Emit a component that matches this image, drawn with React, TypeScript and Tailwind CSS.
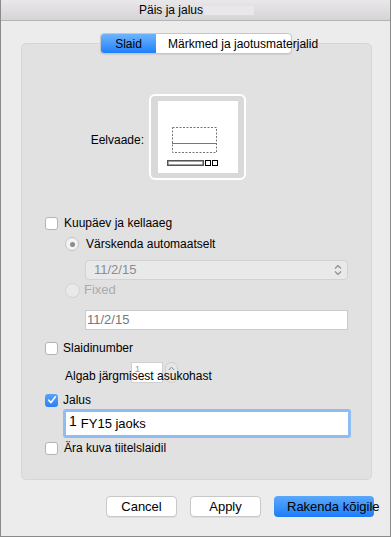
import React from 'react';

const font = { fontFamily: '"Liberation Sans", Arial, sans-serif' };

const Checkbox: React.FC<{ checked?: boolean }> = ({ checked }) =>
  checked ? (
    <span className="flex h-[13px] w-[13px] shrink-0 items-center justify-center rounded-[3px] bg-gradient-to-b from-[#5aa3fb] to-[#2a7ff4]">
      <svg width="10" height="10" viewBox="0 0 10 10">
        <path d="M1.8 5.2 L4 7.6 L8.4 1.8" fill="none" stroke="#fff" strokeWidth="1.6" strokeLinecap="round" strokeLinejoin="round" />
      </svg>
    </span>
  ) : (
    <span className="h-[13px] w-[13px] shrink-0 rounded-[3px] border border-[#b3b3b3] bg-white" />
  );

const Preview: React.FC = () => (
  <div className="flex h-[86px] w-[97px] items-center justify-center rounded-[6px] border-2 border-white bg-[#d9d9d9]">
    <svg width="80" height="72" viewBox="0 0 80 72" className="bg-white">
      <rect x="14.5" y="26.5" width="44" height="25" fill="none" stroke="#777" strokeDasharray="2 1.5" />
      <line x1="14" y1="42.5" x2="59" y2="42.5" stroke="#777" />
      <rect x="9" y="59" width="37" height="6" fill="#555" />
      <rect x="10.5" y="60.5" width="34" height="3" fill="#fff" stroke="#999" strokeWidth="0.5" />
      <rect x="47.5" y="59.5" width="5" height="5" fill="#fff" stroke="#000" />
      <rect x="54.5" y="59.5" width="5" height="5" fill="#fff" stroke="#000" />
    </svg>
  </div>
);

export default function App() {
  return (
    <div
      className="relative h-[537px] w-[391px] overflow-hidden border-x border-b border-[#8a8a8a] bg-[#ececec] text-[12px] text-black"
      style={font}
    >
      {/* title bar */}
      <div className="flex h-[21px] items-center border-b border-[#b4b4b4] bg-gradient-to-b from-[#e9e7e9] to-[#d6d4d6] pl-[138px]">
        <span className="leading-none">Päis ja jalus</span>
        <span className="ml-px h-[9px] w-[50px] bg-[#e9e7e9]" />
      </div>

      {/* tabs */}
      <div className="relative z-10 ml-[99px] mt-[12px] flex h-[21px] w-[192px] overflow-visible rounded-[4px] border border-[#c6c6c6] bg-white shadow-[0_1px_1px_rgba(0,0,0,0.08)]">
        <div className="flex w-[55px] shrink-0 items-center justify-center rounded-l-[3px] bg-gradient-to-b from-[#6db4fb] to-[#1b7ffb]">
          <span className="px-px">Slaid</span>
        </div>
        <div className="flex items-center whitespace-nowrap pl-[12px]">Märkmed ja jaotusmaterjalid</div>
      </div>

      {/* group box */}
      <div className="-mt-[11px] ml-[20px] h-[437px] w-[351px] rounded-[5px] border border-[#d6d6d6] bg-[#e1e1e1]">
        <div className="mt-[50px] flex items-center">
          <div className="w-[122px] pt-[6px] text-right">Eelvaade:</div>
          <div className="ml-[5px]">
            <Preview />
          </div>
        </div>

        <div className="ml-[23px] mt-[35px] flex h-[16px] items-center gap-[6px]">
          <Checkbox />
          <span>Kuupäev ja kellaaeg</span>
        </div>

        <div className="ml-[43px] mt-[5px] flex h-[16px] items-center gap-[7px]">
          <span className="flex h-[14px] w-[14px] items-center justify-center rounded-full border border-[#c4c4c4] bg-[#f2f2f2]">
            <span className="h-[5px] w-[5px] rounded-full bg-[#8c8c8c]" />
          </span>
          <span>Värskenda automaatselt</span>
        </div>

        <div className="ml-[63px] mt-[8px] flex h-[20px] w-[263px] items-center justify-between rounded-[4px] border border-[#d2d2d2] bg-[#e9e9e9] pl-[8px] pr-[5px] text-[13px] text-[#8c8c8c]">
          <span>11/2/15</span>
          <svg width="8" height="12" viewBox="0 0 8 12">
            <path d="M1 4.5 L4 1.5 L7 4.5 M1 7.5 L4 10.5 L7 7.5" fill="none" stroke="#8a8a8a" strokeWidth="1.1" />
          </svg>
        </div>

        <div className="ml-[43px] mt-[2px] flex h-[16px] items-center gap-[4px] text-[13px] text-[#ababab]">
          <span className="h-[15px] w-[15px] rounded-full border border-[#d2d2d2] bg-[#e9e9e9]" />
          <span>Fixed</span>
        </div>

        <div className="ml-[63px] mt-[12px] flex h-[20px] w-[263px] items-center border border-[#cbcbcb] bg-white pl-[1px] text-[13px] text-[#777]">
          11/2/15
        </div>

        <div className="ml-[23px] mt-[10px] flex h-[16px] items-center gap-[5px]">
          <Checkbox />
          <span>Slaidinumber</span>
        </div>

        <div className="relative ml-[43px] mt-[6px] h-[24px]">
          <div className="absolute left-[66px] top-0 h-[21px] w-[32px] border border-[#d0d0d0] bg-white">
            <span className="absolute left-[3px] top-0 text-[9px] text-[#999]">1</span>
          </div>
          <div className="absolute left-[100px] top-0 flex h-[21px] w-[13px] items-start justify-center rounded-[6px] border border-[#cfcfcf] bg-[#e6e6e6] pt-[3px]">
            <svg width="7" height="5" viewBox="0 0 7 5">
              <path d="M0.8 4 L3.5 1.2 L6.2 4" fill="none" stroke="#888" strokeWidth="1" />
            </svg>
          </div>
          <span className="relative block pt-[6px] leading-[16px]">Algab järgmisest asukohast</span>
        </div>

        <div className="ml-[23px] mt-[6px] flex h-[16px] items-center gap-[5px]">
          <Checkbox checked />
          <span>Jalus</span>
        </div>

        <div className="ml-[41px] mt-[1px] flex h-[29px] w-[288px] items-center rounded-[3px] border-[3px] border-[#8fbcf2] bg-white pl-[3px] text-[13px]">
          <span className="-mt-[4px] text-[14px]">1</span>
          <span className="ml-[4px]">FY15 jaoks</span>
        </div>

        <div className="ml-[23px] mt-[2px] flex h-[16px] items-center gap-[6px]">
          <Checkbox />
          <span>Ära kuva tiitelslaidil</span>
        </div>
      </div>

      {/* buttons */}
      <div className="ml-[105px] mt-[16px] flex gap-[13px] text-[13px]">
        <button className="flex h-[21px] w-[71px] items-center justify-center rounded-[4px] border border-[#c8c8c8] bg-white shadow-[0_1px_0_rgba(0,0,0,0.06)]">
          Cancel
        </button>
        <button className="flex h-[21px] w-[71px] items-center justify-center rounded-[4px] border border-[#c8c8c8] bg-white shadow-[0_1px_0_rgba(0,0,0,0.06)]">
          Apply
        </button>
        <button className="flex h-[21px] w-[100px] items-center whitespace-nowrap rounded-[4px] bg-gradient-to-b from-[#5aa8fb] to-[#1a7dfa] pl-[13px]">
          Rakenda kõigile
        </button>
      </div>
    </div>
  );
}
